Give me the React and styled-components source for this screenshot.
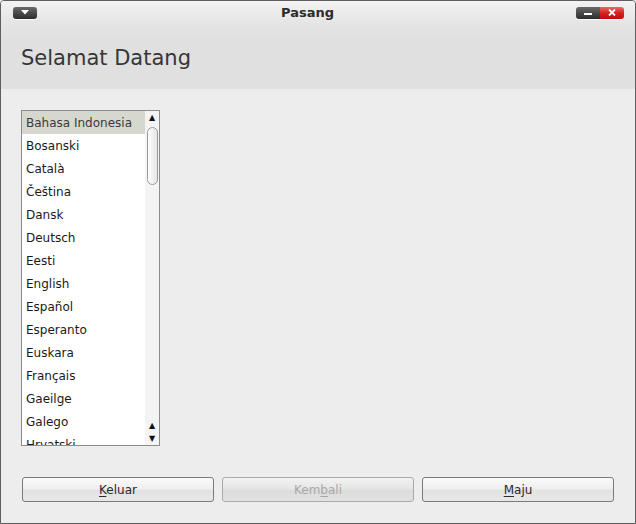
import styled, { createGlobalStyle } from "styled-components";

const LANGUAGES = [
  "Bahasa Indonesia",
  "Bosanski",
  "Català",
  "Čeština",
  "Dansk",
  "Deutsch",
  "Eesti",
  "English",
  "Español",
  "Esperanto",
  "Euskara",
  "Français",
  "Gaeilge",
  "Galego",
  "Hrvatski",
];

const GlobalStyle = createGlobalStyle`
  html, body {
    margin: 0;
    padding: 0;
    background: #ededed;
  }
  body {
    font-family: "DejaVu Sans", "Liberation Sans", sans-serif;
  }
`;

const App = () => {
  return (
    <>
      <GlobalStyle />
      <Window>
        <Header>
          <TitleBar>
            <MenuButton>
              <svg width="8" height="5" viewBox="0 0 8 5">
                <path d="M0 0 H8 L4 4.5 Z" fill="#fff" />
              </svg>
            </MenuButton>
            <Title>Pasang</Title>
            <WindowControls>
              <MinButton>
                <span />
              </MinButton>
              <CloseButton>
                <svg width="8" height="7" viewBox="0 0 8 7">
                  <path d="M1 0.5 L7 6.5 M7 0.5 L1 6.5" stroke="#fff" strokeWidth="1.8" />
                </svg>
              </CloseButton>
            </WindowControls>
          </TitleBar>
          <Heading>Selamat Datang</Heading>
        </Header>

        <Body>
          <ListBox>
            <ListItems>
              {LANGUAGES.map((lang, i) => (
                <ListItem key={lang} selected={i === 0}>
                  {lang}
                </ListItem>
              ))}
            </ListItems>
            <ScrollBar>
              <Arrow>▲</Arrow>
              <Thumb />
              <Spacer />
              <Arrow>▲</Arrow>
              <Arrow>▼</Arrow>
            </ScrollBar>
          </ListBox>
        </Body>

        <Footer>
          <Button>
            <u>K</u>eluar
          </Button>
          <Button disabled>
            Kem<u>b</u>ali
          </Button>
          <Button>
            <u>M</u>aju
          </Button>
        </Footer>
      </Window>
    </>
  );
};

const Window = styled.div`
  width: 636px;
  height: 524px;
  box-sizing: border-box;
  border: 1px solid #5e5e5e;
  border-radius: 4px 4px 0 0;
  background: #ededed;
  display: flex;
  flex-direction: column;
  overflow: hidden;
`;

const Header = styled.div`
  height: 88px;
  flex-shrink: 0;
  background: linear-gradient(to bottom, #f2f2f2 0px, #e4e4e4 24px, #e0e0e0 40px, #e0e0e0 100%);
  display: flex;
  flex-direction: column;
`;

const TitleBar = styled.div`
  height: 23px;
  display: flex;
  align-items: center;
  padding: 0 11px 0 12px;
`;

const MenuButton = styled.div`
  width: 24px;
  height: 12px;
  border-radius: 3px;
  background: linear-gradient(to bottom, #6a6a6a 0%, #4a4a4a 50%, #2e2e2e 100%);
  display: flex;
  align-items: center;
  justify-content: center;
  box-shadow: 0 1px 0 #fafafa;
`;

const Title = styled.div`
  flex: 1;
  text-align: center;
  font-weight: bold;
  font-size: 13px;
  color: #2c2c2c;
  margin-left: 2px;
`;

const WindowControls = styled.div`
  display: flex;
  height: 12px;
  border-radius: 3px;
  overflow: hidden;
  box-shadow: 0 1px 0 #fafafa;
`;

const MinButton = styled.div`
  width: 24px;
  background: linear-gradient(to bottom, #6a6a6a 0%, #4a4a4a 50%, #2e2e2e 100%);
  display: flex;
  align-items: center;
  justify-content: center;

  span {
    display: block;
    width: 8px;
    height: 2px;
    background: #fff;
    margin-top: 2px;
  }
`;

const CloseButton = styled.div`
  width: 24px;
  background: linear-gradient(to bottom, #e86a6a 0%, #d82020 50%, #c40c0c 100%);
  display: flex;
  align-items: center;
  justify-content: center;
`;

const Heading = styled.h1`
  margin: 0;
  padding: 21px 0 0 20px;
  font-size: 21px;
  font-weight: normal;
  color: #363636;
  line-height: 26px;
`;

const Body = styled.div`
  flex: 1;
  padding: 21px 0 0 20px;
  display: flex;
`;

const ListBox = styled.div`
  width: 139px;
  height: 336px;
  box-sizing: border-box;
  border: 1px solid #8c8c8c;
  background: #fff;
  display: flex;
  overflow: hidden;
`;

const ListItems = styled.div`
  flex: 1;
  overflow: hidden;
`;

const ListItem = styled.div`
  height: 23px;
  box-sizing: border-box;
  padding: 1px 0 0 4px;
  line-height: 22px;
  font-size: 12px;
  white-space: nowrap;
  color: ${(p) => (p.selected ? "#3a3a3a" : "#1a1a1a")};
  background: ${(p) => (p.selected ? "#d6d8cf" : "transparent")};
`;

const ScrollBar = styled.div`
  width: 14px;
  flex-shrink: 0;
  background: #f4f4f4;
  display: flex;
  flex-direction: column;
  align-items: center;
`;

const Arrow = styled.div`
  height: 13px;
  line-height: 13px;
  font-size: 8px;
  color: #111;
`;

const Thumb = styled.div`
  width: 11px;
  height: 58px;
  box-sizing: border-box;
  border: 1px solid #9a9a9a;
  border-radius: 6px;
  background: linear-gradient(to right, #fdfdfd, #e6e6e6);
  margin-top: 3px;
`;

const Spacer = styled.div`
  flex: 1;
`;

const Footer = styled.div`
  height: 48px;
  flex-shrink: 0;
  display: flex;
  gap: 8px;
  padding: 0 21px;
  align-items: flex-start;
`;

const Button = styled.button`
  flex: 1;
  height: 25px;
  margin-top: 2px;
  box-sizing: border-box;
  border: 1px solid #7a7a7a;
  border-radius: 3px;
  background: linear-gradient(to bottom, #fafafa 0%, #efefef 45%, #e2e2e2 55%, #e8e8e8 100%);
  font-family: "DejaVu Sans", "Liberation Sans", sans-serif;
  font-size: 12px;
  color: #2a2a2a;
  padding: 0;

  &:disabled {
    color: #a8a8a8;
    border-color: #aaaaaa;
    background: linear-gradient(to bottom, #f2f2f2 0%, #e6e6e6 45%, #dcdcdc 55%, #e2e2e2 100%);
  }

  u {
    text-underline-offset: 2px;
  }
`;

export default App;
